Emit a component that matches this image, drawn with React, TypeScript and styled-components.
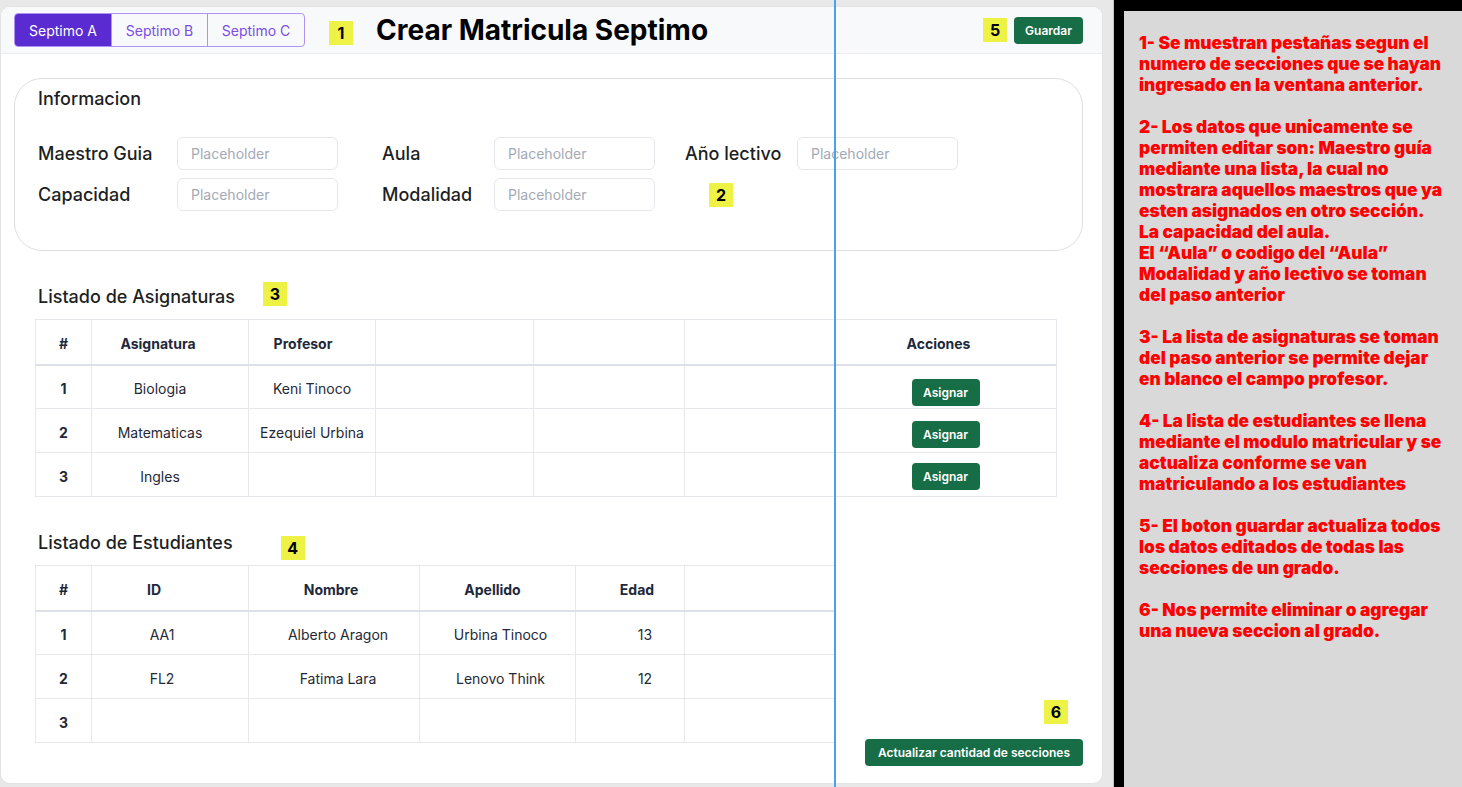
import React from 'react';
import styled, { createGlobalStyle } from 'styled-components';

const GlobalStyle = createGlobalStyle`
  * { box-sizing: border-box; }
  body {
    margin: 0;
    background: #e8e8e8;
    font-family: Inter, "Noto Sans", sans-serif;
  }
`;

const Page = styled.div`
  position: relative;
  display: flex;
  width: 1462px;
  height: 787px;
  overflow: hidden;
`;

const MainCard = styled.main`
  width: 1103px;
  height: 778px;
  margin-top: 6px;
  background: #fff;
  border: 1px solid #e3e3e3;
  border-radius: 10px;
  overflow: hidden;
  display: flex;
  flex-direction: column;
`;

const Header = styled.header`
  flex: none;
  height: 47px;
  display: flex;
  align-items: center;
  padding: 0 19px 0 13px;
  background: #f8f9fb;
  border-bottom: 1px solid #eceef2;
`;

const Tabs = styled.div`
  display: flex;
  height: 34px;
  border: 1px solid #ad93f4;
  border-radius: 4px;
  overflow: hidden;
`;

const Tab = styled.button<{ $active?: boolean; $w: number }>`
  width: ${p => p.$w}px;
  height: 100%;
  border: none;
  border-left: 1px solid #ad93f4;
  &:first-child { border-left: none; }
  background: ${p => (p.$active ? '#5a2bd0' : 'transparent')};
  color: ${p => (p.$active ? '#fff' : '#7b4de6')};
  font-family: inherit;
  font-size: 14px;
  padding: 0;
  cursor: pointer;
`;

const Marker = styled.span<{ $ml?: number; $mt?: number; $mr?: number }>`
  display: inline-flex;
  align-items: center;
  justify-content: center;
  flex: none;
  width: 24px;
  height: 24px;
  margin-left: ${p => p.$ml ?? 0}px;
  margin-top: ${p => p.$mt ?? 0}px;
  margin-right: ${p => p.$mr ?? 0}px;
  background: #eef244;
  color: #000;
  font-size: 16px;
  font-weight: 700;
`;

const Title = styled.h1`
  margin: 0 0 0 23px;
  font-size: 28px;
  font-weight: 700;
  color: #000;
`;

const Spacer = styled.div`
  flex: 1;
`;

const GreenButton = styled.button<{ $w: number; $mt?: number }>`
  width: ${p => p.$w}px;
  height: 27px;
  margin-top: ${p => p.$mt ?? 0}px;
  border: none;
  border-radius: 4px;
  background: #176d45;
  color: #fff;
  font-family: inherit;
  font-size: 12px;
  font-weight: 600;
  padding: 0;
  cursor: pointer;
`;

const Body = styled.div`
  flex: 1;
  display: flex;
  flex-direction: column;
  padding: 24px 19px 0 13px;
`;

const InfoCard = styled.section`
  height: 173px;
  border: 1px solid #dedede;
  border-radius: 28px;
  padding: 9px 0 0 23px;
`;

const CardTitle = styled.h2`
  margin: 0 0 27px;
  height: 22px;
  line-height: 22px;
  font-size: 18px;
  font-weight: 500;
  color: #1d1f23;
`;

const FormGrid = styled.div`
  display: grid;
  grid-template-columns: 139px 205px 112px 191px 112px 162px;
  grid-auto-rows: 33px;
  row-gap: 8px;
  align-items: center;
`;

const Label = styled.label`
  font-size: 18px;
  font-weight: 500;
  color: #1d1f23;
`;

const Input = styled.input`
  width: 161px;
  height: 33px;
  border: 1px solid #e4e6ea;
  border-radius: 6px;
  padding: 0 13px;
  font-family: inherit;
  font-size: 14px;
  color: #1d1f23;
  &::placeholder { color: #a4aab5; }
`;

const SectionHead = styled.div<{ $mt: number }>`
  display: flex;
  align-items: center;
  height: 24px;
  margin: ${p => p.$mt}px 0 11px;
  padding-left: 24px;
`;

const SectionTitle = styled.h3`
  margin: 0;
  font-size: 18px;
  font-weight: 500;
  color: #1d1f23;
`;

const Table = styled.table<{ $w: number }>`
  width: ${p => p.$w}px;
  margin-left: 21px;
  border-collapse: collapse;
  table-layout: fixed;
`;

const Col = styled.col<{ $w: number }>`
  width: ${p => p.$w}px;
`;

/* $shift moves the cell text left (negative) or right (positive) of the column centre */
const Th = styled.th<{ $shift?: number }>`
  height: 45px;
  padding: 3px ${p => Math.max(0, -(p.$shift ?? 0) * 2)}px 0 ${p => Math.max(0, (p.$shift ?? 0) * 2)}px;
  border: 1px solid #e6e8ec;
  border-bottom: 2px solid #dde1e7;
  font-size: 14px;
  font-weight: 700;
  color: #1e293b;
  text-align: center;
`;

const Td = styled.td<{ $bold?: boolean; $shift?: number }>`
  height: 44px;
  padding: 3px ${p => Math.max(0, -(p.$shift ?? 0) * 2)}px 0 ${p => Math.max(0, (p.$shift ?? 0) * 2)}px;
  border: 1px solid #e6e8ec;
  font-size: 14px;
  font-weight: ${p => (p.$bold ? 700 : 400)};
  color: ${p => (p.$bold ? '#1e293b' : '#1f2937')};
  text-align: center;
`;

const StudentsRow = styled.div`
  display: flex;
  align-items: flex-end;
  justify-content: space-between;
`;

const StudentsBlock = styled.div`
  margin-bottom: 23px;
`;

const FooterActions = styled.div`
  display: flex;
  flex-direction: column;
  align-items: flex-end;
  gap: 15px;
`;

const Notes = styled.aside`
  flex: 1;
  margin-left: 11px;
  background: #d9d9d9;
  border-left: 10px solid #000;
  border-top: 11px solid #000;
  box-shadow: -1px 0 0 #c4c4c4;
  padding: 21px 0 0 15px;
  color: #ff0000;
  font-size: 17.3px;
  font-weight: 900;
  line-height: 21px;
  white-space: nowrap;
`;

const Note = styled.p`
  margin: 0 0 21px;
`;

const GuideLine = styled.div`
  position: absolute;
  top: 0;
  bottom: 0;
  left: 834px;
  width: 2px;
  background: #4aa1ee;
`;

const subjects = [
  { n: 1, name: 'Biologia', teacher: 'Keni Tinoco', btn: 9 },
  { n: 2, name: 'Matematicas', teacher: 'Ezequiel Urbina', btn: 4 },
  { n: 3, name: 'Ingles', teacher: '', btn: 0 },
];

const students = [
  { n: 1, id: 'AA1', name: 'Alberto Aragon', last: 'Urbina Tinoco', age: '13' },
  { n: 2, id: 'FL2', name: 'Fatima Lara', last: 'Lenovo Think', age: '12' },
  { n: 3, id: '', name: '', last: '', age: '' },
];

const notes = [
  ['1- Se muestran pestañas segun el', 'numero de secciones que se hayan', 'ingresado en la ventana anterior.'],
  [
    '2- Los datos que unicamente se',
    'permiten editar son: Maestro guía',
    'mediante una lista, la cual no',
    'mostrara aquellos maestros que ya',
    'esten asignados en otro sección.',
    'La capacidad del aula.',
    'El “Aula” o codigo del “Aula”',
    'Modalidad y año lectivo se toman',
    'del paso anterior',
  ],
  ['3- La lista de asignaturas se toman', 'del paso anterior se permite dejar', 'en blanco el campo profesor.'],
  [
    '4- La lista de estudiantes se llena',
    'mediante el modulo matricular y se',
    'actualiza conforme se van',
    'matriculando a los estudiantes',
  ],
  ['5- El boton guardar actualiza todos', 'los datos editados de todas las', 'secciones de un grado.'],
  ['6- Nos permite eliminar o agregar', 'una nueva seccion al grado.'],
];

const subjectCols = [56, 157, 127, 158, 151, 150, 222];
const studentCols = [56, 157, 171, 156, 109, 150];

const App: React.FC = () => {
  return (
    <>
      <GlobalStyle />
      <Page>
        <MainCard>
          <Header>
            <Tabs>
              <Tab $active $w={96}>Septimo A</Tab>
              <Tab $w={96}>Septimo B</Tab>
              <Tab $w={97}>Septimo C</Tab>
            </Tabs>
            <Marker $ml={24} $mt={6}>1</Marker>
            <Title>Crear Matricula Septimo</Title>
            <Spacer />
            <Marker $mr={7}>5</Marker>
            <GreenButton $w={69}>Guardar</GreenButton>
          </Header>

          <Body>
            <InfoCard>
              <CardTitle>Informacion</CardTitle>
              <FormGrid>
                <Label>Maestro Guia</Label>
                <Input placeholder="Placeholder" />
                <Label>Aula</Label>
                <Input placeholder="Placeholder" />
                <Label>Año lectivo</Label>
                <Input placeholder="Placeholder" />
                <Label>Capacidad</Label>
                <Input placeholder="Placeholder" />
                <Label>Modalidad</Label>
                <Input placeholder="Placeholder" />
                <Marker $ml={24}>2</Marker>
              </FormGrid>
            </InfoCard>

            <SectionHead $mt={33}>
              <SectionTitle>Listado de Asignaturas</SectionTitle>
              <Marker $ml={28} $mt={-4}>3</Marker>
            </SectionHead>
            <Table $w={1021}>
              <colgroup>
                {subjectCols.map((w, i) => <Col key={i} $w={w} />)}
              </colgroup>
              <thead>
                <tr>
                  <Th>#</Th>
                  <Th $shift={-12}>Asignatura</Th>
                  <Th $shift={-9}>Profesor</Th>
                  <Th />
                  <Th />
                  <Th />
                  <Th $shift={-7}>Acciones</Th>
                </tr>
              </thead>
              <tbody>
                {subjects.map(s => (
                  <tr key={s.n}>
                    <Td $bold>{s.n}</Td>
                    <Td $shift={-10}>{s.name}</Td>
                    <Td>{s.teacher}</Td>
                    <Td />
                    <Td />
                    <Td />
                    <Td>
                      <GreenButton $w={68} $mt={s.btn}>Asignar</GreenButton>
                    </Td>
                  </tr>
                ))}
              </tbody>
            </Table>

            <StudentsRow>
              <StudentsBlock>
                <SectionHead $mt={33}>
                  <SectionTitle>Listado de Estudiantes</SectionTitle>
                  <Marker $ml={48} $mt={12}>4</Marker>
                </SectionHead>
                <Table $w={799}>
                  <colgroup>
                    {studentCols.map((w, i) => <Col key={i} $w={w} />)}
                  </colgroup>
                  <thead>
                    <tr>
                      <Th>#</Th>
                      <Th $shift={-16}>ID</Th>
                      <Th $shift={-3}>Nombre</Th>
                      <Th $shift={-5}>Apellido</Th>
                      <Th $shift={7}>Edad</Th>
                      <Th />
                    </tr>
                  </thead>
                  <tbody>
                    {students.map(s => (
                      <tr key={s.n}>
                        <Td $bold>{s.n}</Td>
                        <Td $shift={-8}>{s.id}</Td>
                        <Td $shift={4}>{s.name}</Td>
                        <Td $shift={3}>{s.last}</Td>
                        <Td $shift={15}>{s.age}</Td>
                        <Td />
                      </tr>
                    ))}
                  </tbody>
                </Table>
              </StudentsBlock>
              <FooterActions>
                <Marker $mr={15}>6</Marker>
                <GreenButton $w={218}>Actualizar cantidad de secciones</GreenButton>
              </FooterActions>
            </StudentsRow>
          </Body>
        </MainCard>

        <Notes>
          {notes.map((lines, i) => (
            <Note key={i}>
              {lines.map((l, j) => (
                <React.Fragment key={j}>
                  {l}
                  {j < lines.length - 1 && <br />}
                </React.Fragment>
              ))}
            </Note>
          ))}
        </Notes>

        <GuideLine />
      </Page>
    </>
  );
};

export default App;
